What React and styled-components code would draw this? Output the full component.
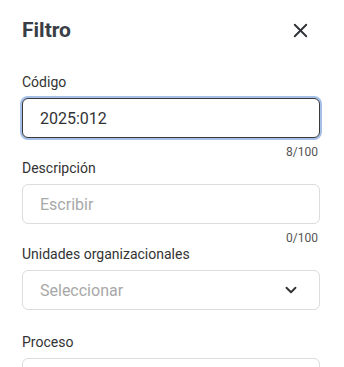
import React, { useState } from 'react'
import styled, { createGlobalStyle } from 'styled-components'
import { X, ChevronDown } from 'lucide-react'

const Global = createGlobalStyle`
    body {
        margin: 0;
        background: #fff;
        font-family: Roboto, "Liberation Sans", sans-serif;
    }
`

export default function App() {

    const [codigo, setCodigo] = useState("2025:012")
    const [descripcion, setDescripcion] = useState("")

    return (
        <>
            <Global />
            <Panel>
                <Header>
                    <Title>Filtro</Title>
                    <CloseButton aria-label="Cerrar">
                        <X size={23} strokeWidth={2} />
                    </CloseButton>
                </Header>

                <Field>
                    <Label>Código</Label>
                    <Input focused value={codigo} maxLength={100} onChange={(e) => setCodigo(e.target.value)} />
                    <Counter>{codigo.length}/100</Counter>
                </Field>

                <Field>
                    <Label>Descripción</Label>
                    <Input placeholder="Escribir" value={descripcion} maxLength={100} onChange={(e) => setDescripcion(e.target.value)} />
                    <Counter>{descripcion.length}/100</Counter>
                </Field>

                <Field>
                    <Label>Unidades organizacionales</Label>
                    <Select>
                        <Placeholder>Seleccionar</Placeholder>
                        <ChevronDown size={18} strokeWidth={2.5} color="#333" />
                    </Select>
                    <Counter $spacer />
                </Field>

                <Field>
                    <Label>Proceso</Label>
                    {/* only the top edge of this select is in view */}
                    <Select />
                </Field>
            </Panel>
        </>
    )
}

const Panel = styled.div`
    display: flex;
    flex-direction: column;
    padding: 14px 24px 0 22px;
    height: 367px;
    box-sizing: border-box;
    overflow: hidden;
`

const Header = styled.div`
    display: flex;
    align-items: center;
    justify-content: space-between;
    height: 32px;
    margin-bottom: 28px;
`

const Title = styled.h2`
    margin: 0;
    font-size: 21px;
    font-weight: 700;
    line-height: 32px;
    color: #393d45;
`

const CloseButton = styled.button`
    display: flex;
    align-items: center;
    justify-content: center;
    width: 40px;
    height: 32px;
    padding: 0;
    border: none;
    background: none;
    color: #2f3237;
    cursor: pointer;
`

const Field = styled.div`
    display: flex;
    flex-direction: column;
    flex-shrink: 0;
`

const Label = styled.label`
    font-size: 14px;
    line-height: 16px;
    color: #333;
    margin-bottom: 8px;
`

const Input = styled.input`
    box-sizing: border-box;
    height: 40px;
    width: 100%;
    padding: 0 16px 0 17px;
    font-family: inherit;
    font-size: 16px;
    color: #333;
    border-radius: 6px;
    outline: none;
    border: 1px solid ${(p) => (p.focused ? "#3a3a3a" : "#dcdcdc")};
    box-shadow: ${(p) => (p.focused ? "0 0 0 2px #a6bfe9" : "none")};
    &::placeholder {
        color: #a8a8a8;
    }
`

const Select = styled.div`
    box-sizing: border-box;
    height: 40px;
    flex-shrink: 0;
    display: flex;
    align-items: center;
    justify-content: space-between;
    padding: 0 19px 0 17px;
    border: 1px solid #dcdcdc;
    border-radius: 6px;
`

const Placeholder = styled.span`
    font-size: 16px;
    color: #a8a8a8;
`

const Counter = styled.div`
    height: 16px;
    margin-top: ${(p) => (p.$spacer ? "8px" : "6px")};
    font-size: 12px;
    line-height: 16px;
    color: #555;
    text-align: right;
    padding-right: 2px;
`
